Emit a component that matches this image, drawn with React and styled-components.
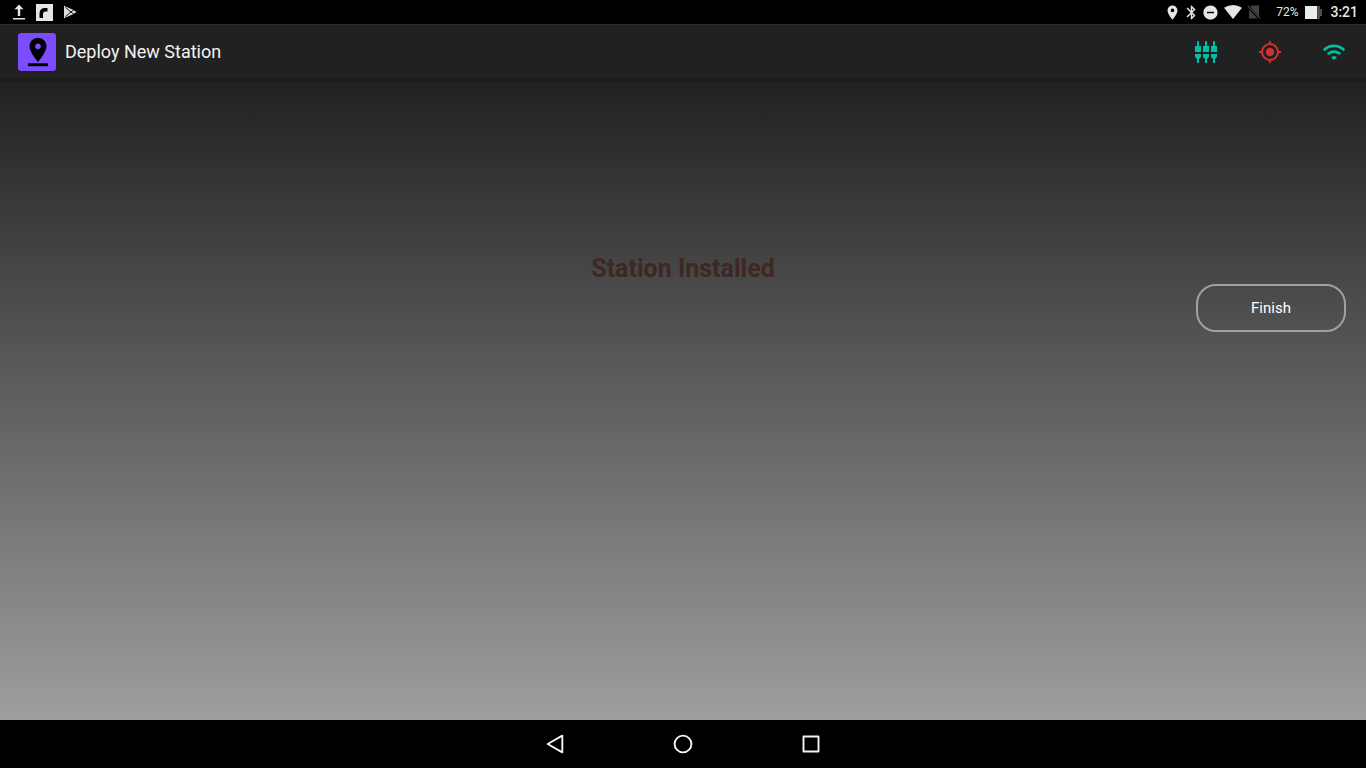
import React from "react";
import styled, { createGlobalStyle } from "styled-components";
import {
  MdBluetooth,
  MdDoNotDisturbOn,
  MdPinDrop,
  MdPlace,
  MdSettingsInputComponent,
} from "react-icons/md";

const GlobalStyle = createGlobalStyle`
  * { box-sizing: border-box; }
  body { margin: 0; font-family: Roboto, "Liberation Sans", sans-serif; background: #000; }
  svg { display: block; flex: none; }
`;

const Screen = styled.div`
  min-height: 100vh;
  display: flex;
  flex-direction: column;
`;

const StatusBar = styled.div`
  height: 24px;
  padding: 0 8px 0 10px;
  display: flex;
  align-items: center;
  justify-content: space-between;
  background: #000;
  color: #e6e6e6;
`;

const StatusGroup = styled.div`
  display: flex;
  align-items: center;
  gap: ${(p) => p.$gap}px;
`;

const Battery = styled.span`
  margin: 0 7px 0 15px;
  font-size: 12px;
  line-height: 24px;
`;

const Clock = styled.time`
  margin-left: 8px;
  font-size: 14px;
  font-weight: 500;
  line-height: 24px;
`;

const AppBar = styled.header`
  height: 57px;
  padding: 0 20px 0 18px;
  display: flex;
  align-items: center;
  justify-content: space-between;
  background: #212121;
  border-top: 1px solid #2b2b2b;
  border-bottom: 3px solid #1b1b1b;
`;

const Brand = styled.div`
  display: flex;
  align-items: center;
  gap: 9px;
`;

const Logo = styled.div`
  width: 38px;
  height: 38px;
  padding-left: 2px;
  display: flex;
  align-items: center;
  justify-content: center;
  border-radius: 3px;
  background: #7c4dff;
  color: #000;
`;

const Title = styled.h1`
  margin: 0;
  color: #f2f2f2;
  font-size: 18px;
  font-weight: 400;
  line-height: 38px;
  padding-top: 1px;
`;

const Actions = styled.div`
  display: flex;
  gap: 40px;
`;

const IconButton = styled.button`
  width: 24px;
  height: 24px;
  padding: 0;
  border: 0;
  background: none;
  color: ${(p) => p.$color};
`;

const Content = styled.main`
  flex: 1;
  padding: 172px 20px 0;
  display: flex;
  flex-direction: column;
  background: linear-gradient(#212121, #9e9e9e);
`;

const Message = styled.h2`
  margin: 0;
  color: #402624;
  font-size: 25px;
  font-weight: 700;
  line-height: 31px;
  text-align: center;
`;

const FinishButton = styled.button`
  align-self: flex-end;
  width: 150px;
  height: 48px;
  border: 2px solid #a0a0a0;
  border-radius: 20px;
  background: transparent;
  color: #fff;
  font-family: inherit;
  font-size: 15px;
  line-height: 20px;
`;

const NavBar = styled.nav`
  height: 48px;
  display: flex;
  align-items: center;
  justify-content: center;
  gap: 104px;
  background: #000;
`;

const UploadIcon = () => (
  <svg width="18" height="18" viewBox="0 0 18 18" fill="currentColor">
    <path d="M9 1.500l4.500 4.700h-3.300V13H7.800V6.200H4.500zM3 15h12v1.600H3z" />
  </svg>
);

const NotificationIcon = () => (
  <svg width="17" height="17" viewBox="0 0 17 17">
    <path d="M0 0h17v17H0z" fill="currentColor" />
    <path d="M3.500 14V9.500Q3.500 4 9 4h2.500v3.500H9.500Q7 7.500 7 10v4z" fill="#000" />
  </svg>
);

const PlayIcon = () => (
  <svg width="14" height="14" viewBox="0 0 14 14">
    <path d="M1 .8l9 4 3.500 2.200L10 9.200l-9 4z" fill="#dcdcdc" />
    <path d="M2.300 2.200L11 9.500M2.300 11.800L11 4.500" fill="none" stroke="#000" strokeWidth=".9" />
  </svg>
);

const SignalIcon = () => (
  <svg width="18" height="14" viewBox="0 0 18 14" fill="currentColor">
    <path d="M0 2.800Q9-2.600 18 2.800L9 14z" />
  </svg>
);

const NoSimIcon = () => (
  <svg width="14" height="14" viewBox="0 0 14 14">
    <path d="M5 .5h7v10.800L3.600 2zM2 4.500L10.500 13.500H2z" fill="#414141" />
    <path d="M.8 .8l12.400 12.700" stroke="#414141" strokeWidth="1.300" />
  </svg>
);

const BatteryIcon = () => (
  <svg width="17" height="13" viewBox="0 0 17 13">
    <path d="M12 0h3v3h2v7h-2v3h-3z" fill="#4d4d4d" />
    <path d="M0 0h12v13H0z" fill="#ececec" />
  </svg>
);

const LocationIcon = () => (
  <svg width="24" height="24" viewBox="0 0 24 24">
    <circle cx="12" cy="12" r="4" fill="currentColor" />
    <g fill="none" stroke="currentColor" strokeWidth="2">
      <circle cx="12" cy="12" r="8" />
      <path d="M12 1v3M12 20v3M1 12h3M20 12h3" />
    </g>
  </svg>
);

const WifiIcon = () => (
  <svg width="24" height="24" viewBox="0 0 24 24">
    <g fill="none" stroke="currentColor" strokeWidth="2.600" strokeLinecap="round">
      <path d="M2.500 9.600Q6.700 5.900 12 5.900T21.500 9.600" />
      <path d="M6.500 13.500Q9 11.600 12 11.600T17.500 13.500" />
    </g>
    <path d="M9.500 17.500Q12 15.200 14.500 17.500L12 19.700z" fill="currentColor" stroke="currentColor" strokeWidth=".6" strokeLinejoin="round" />
  </svg>
);

const NavIcon = ({ children }) => (
  <svg
    width="24"
    height="24"
    viewBox="0 0 24 24"
    fill="none"
    stroke="currentColor"
    strokeWidth="1.900"
    strokeLinejoin="round"
  >
    {children}
  </svg>
);

export default function App() {
  return (
    <Screen>
      <GlobalStyle />
      <StatusBar>
        <StatusGroup $gap={10}>
          <StatusGroup $gap={8}>
            <UploadIcon />
            <NotificationIcon />
          </StatusGroup>
          <PlayIcon />
        </StatusGroup>
        <StatusGroup $gap={0}>
          <StatusGroup $gap={5}>
            <StatusGroup $gap={2}>
              <MdPlace size={17} />
              <MdBluetooth size={17} />
              <MdDoNotDisturbOn size={17} />
            </StatusGroup>
            <SignalIcon />
            <NoSimIcon />
          </StatusGroup>
          <Battery>72%</Battery>
          <BatteryIcon />
          <Clock>3:21</Clock>
        </StatusGroup>
      </StatusBar>
      <AppBar>
        <Brand>
          <Logo>
            <MdPinDrop size={34} />
          </Logo>
          <Title>Deploy New Station</Title>
        </Brand>
        <Actions>
          <IconButton $color="#00bfa5" aria-label="Sensors">
            <MdSettingsInputComponent size={24} />
          </IconButton>
          <IconButton $color="#d32f2f" aria-label="Location">
            <LocationIcon />
          </IconButton>
          <IconButton $color="#00bfa5" aria-label="Wi-Fi">
            <WifiIcon />
          </IconButton>
        </Actions>
      </AppBar>
      <Content>
        <Message>Station Installed</Message>
        <FinishButton>Finish</FinishButton>
      </Content>
      <NavBar>
        <IconButton $color="#f5f5f5" aria-label="Back">
          <NavIcon>
            <path d="M19.300 3.700v16.600L4.700 12z" />
          </NavIcon>
        </IconButton>
        <IconButton $color="#f5f5f5" aria-label="Home">
          <NavIcon>
            <circle cx="12" cy="12" r="8.400" />
          </NavIcon>
        </IconButton>
        <IconButton $color="#f5f5f5" aria-label="Recent apps">
          <NavIcon>
            <path d="M4.500 4.500h15v15h-15z" />
          </NavIcon>
        </IconButton>
      </NavBar>
    </Screen>
  );
}
